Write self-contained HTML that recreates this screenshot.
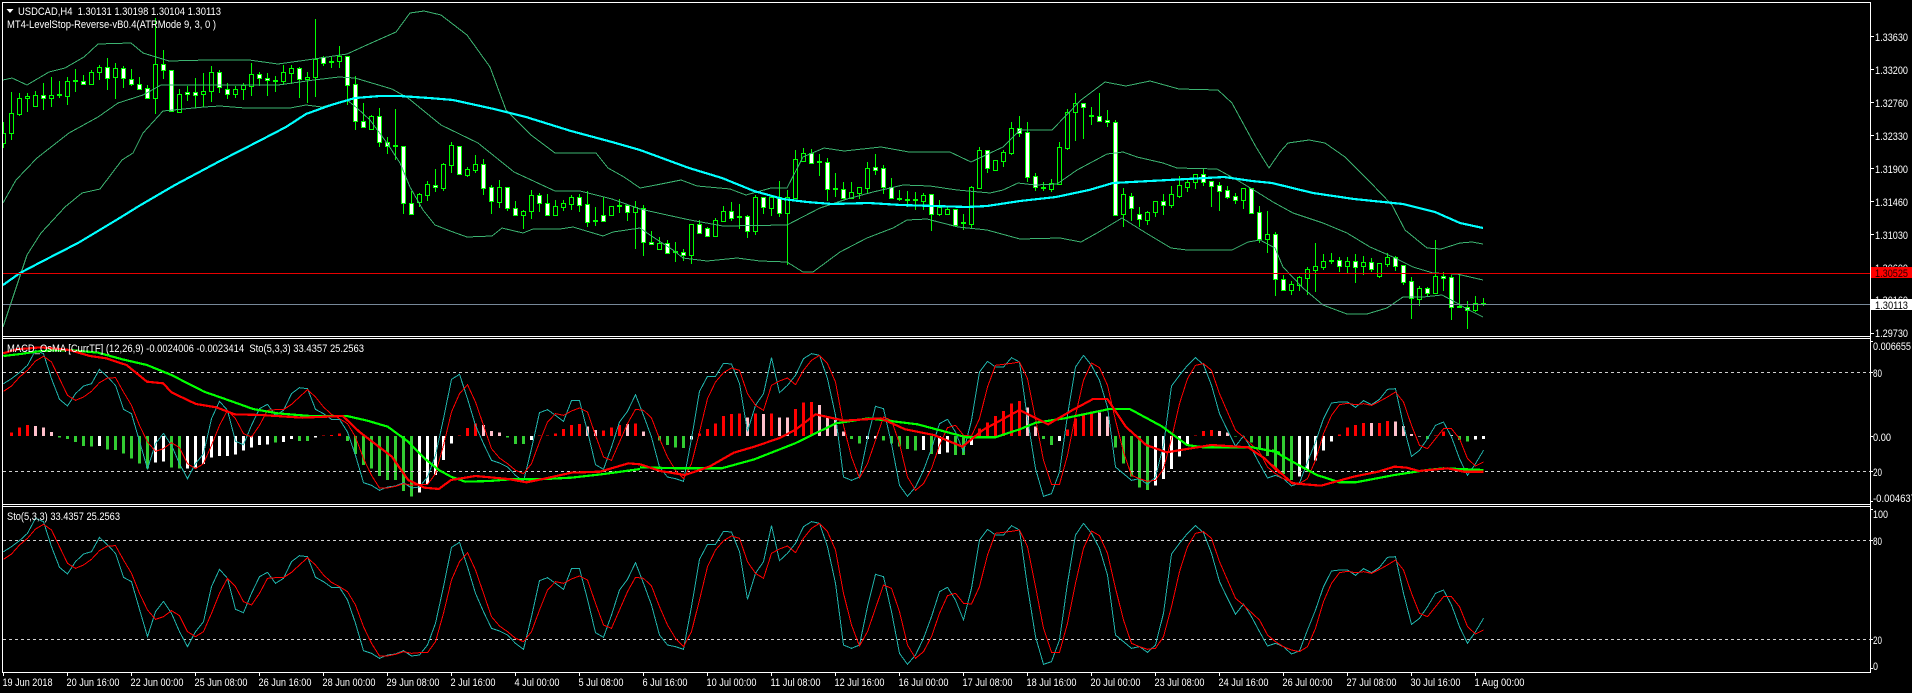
<!DOCTYPE html>
<html><head><meta charset="utf-8"><title>USDCAD,H4</title>
<style>
html,body{margin:0;padding:0;background:#000;overflow:hidden}
svg{display:block}
text{font-family:"Liberation Sans",sans-serif;font-size:11px;fill:#fff}
</style></head><body>
<svg width="1912" height="693" viewBox="0 0 1912 693" xmlns="http://www.w3.org/2000/svg">
<rect width="1912" height="693" fill="#000"/>
<!-- candles -->
<g shape-rendering="crispEdges">
<path transform="translate(.5,0)" stroke="#0f0" fill="none" d="M3 122V148M11 92V140M19 93V116M27 93V112M35 91V106M43 83V110M51 77V107M59 81V98M67 77V105M75 69V92M83 75V84M91 70V84M99 65V80M107 58V90M115 63V99M123 66V88M131 69V86M139 77V90M147 85V99M155 18V114M163 50V79M171 70V112M179 89V112M187 86V101M195 78V108M203 73V107M211 66V102M219 70V93M227 83V99M235 86V98M243 83V100M251 63V96M259 72V86M267 73V96M275 76V92M283 65V85M291 65V84M299 67V98M307 72V103M315 19V97M323 56V66M331 57V68M339 46V68M347 56V105M355 76V130M363 103V128M371 115V130M379 108V147M387 137V154M395 109V160M403 146V214M411 191V215M419 193V207M427 181V201M435 169V192M443 163V191M451 142V173M459 146V174M467 167V177M475 155V173M483 159V195M491 185V214M499 180V208M507 187V211M515 201V216M523 210V229M531 190V219M539 193V212M547 194V215M555 200V215M563 200V211M571 195V210M579 194V212M587 191V227M595 207V226M603 197V222M611 206V215M619 199V213M627 205V221M635 201V249M643 205V256M651 231V245M659 237V249M667 240V253M675 242V262M683 249V261M691 224V264M699 220V234M707 227V237M715 218V237M723 206V221M731 202V221M739 204V229M747 215V238M755 195V235M763 197V214M771 195V216M779 181V217M787 190V265M795 150V199M803 148V161M811 149V164M819 154V176M827 158V201M835 173V197M843 182V198M851 182V199M859 187V199M867 162V193M875 154V175M883 165V194M891 178V198M899 190V201M907 191V207M915 192V210M923 193V210M931 194V231M939 200V216M947 207V214M955 209V226M963 214V230M971 186V228M979 147V189M987 150V173M995 160V170M1003 150V167M1011 122V155M1019 116V137M1027 122V182M1035 173V191M1043 182V191M1051 179V192M1059 142V185M1067 109V150M1075 93V141M1083 103V139M1091 107V125M1099 93V122M1107 110V127M1115 120V216M1123 188V227M1131 193V221M1139 207V227M1147 211V225M1155 201V217M1163 194V215M1171 186V208M1179 176V198M1187 178V192M1195 174V189M1203 168V186M1211 181V207M1219 182V211M1227 186V199M1235 193V204M1243 188V209M1251 188V213M1259 206V243M1267 211V253M1275 232V296M1283 275V291M1291 281V295M1299 276V291M1307 267V295M1315 243V292M1323 254V270M1331 253V264M1339 257V272M1347 257V273M1355 254V283M1363 256V275M1371 258V272M1379 263V278M1387 253V267M1395 256V271M1403 265V285M1411 277V319M1419 286V306M1427 287V297M1435 240V294M1443 272V291M1451 275V320M1459 275V308M1467 301V329M1475 296V312M1483 298V306"/>
<!-- hollow bodies -->
<path transform="translate(-1.5,.5)" stroke="#0f0" fill="#000" d="M3 133h4V143h-4zM11 113h4V133h-4zM19 98h4V114h-4zM27 96h4V98h-4zM35 95h4V106h-4zM51 95h4V98h-4zM67 81h4V96h-4zM91 72h4V84h-4zM99 67h4V72h-4zM115 68h4V77h-4zM155 64h4V98h-4zM179 94h4V112h-4zM203 91h4V94h-4zM211 72h4V91h-4zM235 89h4V94h-4zM243 85h4V89h-4zM251 74h4V86h-4zM283 72h4V81h-4zM291 68h4V73h-4zM307 77h4V79h-4zM315 59h4V77h-4zM331 61h4V62h-4zM339 56h4V61h-4zM371 116h4V129h-4zM419 194h4V202h-4zM427 184h4V195h-4zM443 164h4V188h-4zM451 145h4V165h-4zM467 169h4V175h-4zM475 164h4V170h-4zM499 187h4V202h-4zM523 211h4V215h-4zM531 195h4V211h-4zM555 206h4V215h-4zM563 203h4V207h-4zM571 197h4V204h-4zM611 206h4V215h-4zM635 207h4V212h-4zM659 243h4V249h-4zM691 224h4V255h-4zM715 220h4V236h-4zM723 211h4V221h-4zM755 197h4V231h-4zM771 197h4V208h-4zM787 197h4V213h-4zM795 159h4V198h-4zM803 153h4V161h-4zM851 192h4V198h-4zM859 187h4V193h-4zM867 168h4V188h-4zM923 195h4V201h-4zM939 207h4V214h-4zM947 209h4V214h-4zM971 187h4V224h-4zM979 150h4V188h-4zM995 160h4V170h-4zM1003 152h4V161h-4zM1011 128h4V153h-4zM1051 183h4V189h-4zM1059 147h4V184h-4zM1067 112h4V148h-4zM1075 103h4V112h-4zM1123 194h4V214h-4zM1147 212h4V220h-4zM1155 201h4V212h-4zM1171 194h4V205h-4zM1179 185h4V196h-4zM1187 182h4V187h-4zM1195 174h4V182h-4zM1243 188h4V200h-4zM1267 234h4V239h-4zM1291 284h4V290h-4zM1299 277h4V285h-4zM1307 269h4V278h-4zM1315 266h4V270h-4zM1323 261h4V267h-4zM1347 261h4V266h-4zM1363 262h4V266h-4zM1379 263h4V276h-4zM1387 257h4V264h-4zM1419 288h4V299h-4zM1435 276h4V293h-4zM1475 303h4V310h-4z"/>
<!-- white bodies -->
<path transform="translate(-1.5,.5)" stroke="#0f0" fill="#fff" d="M43 95h4V98h-4zM83 81h4V84h-4zM107 67h4V78h-4zM123 68h4V78h-4zM131 79h4V84h-4zM139 84h4V89h-4zM147 88h4V98h-4zM163 64h4V70h-4zM171 70h4V111h-4zM187 92h4V94h-4zM195 92h4V95h-4zM219 72h4V87h-4zM227 89h4V94h-4zM259 74h4V78h-4zM267 78h4V80h-4zM299 68h4V79h-4zM323 57h4V63h-4zM347 56h4V85h-4zM355 84h4V121h-4zM363 121h4V127h-4zM379 116h4V142h-4zM387 142h4V146h-4zM403 146h4V203h-4zM411 203h4V214h-4zM435 185h4V187h-4zM459 146h4V174h-4zM483 164h4V188h-4zM491 187h4V201h-4zM507 187h4V208h-4zM515 208h4V215h-4zM539 195h4V203h-4zM547 203h4V215h-4zM579 197h4V205h-4zM587 204h4V222h-4zM603 215h4V221h-4zM627 205h4V212h-4zM643 208h4V242h-4zM651 242h4V244h-4zM667 243h4V253h-4zM683 252h4V255h-4zM699 224h4V233h-4zM707 228h4V236h-4zM731 211h4V218h-4zM747 216h4V231h-4zM763 197h4V207h-4zM779 197h4V213h-4zM811 153h4V163h-4zM827 162h4V189h-4zM843 189h4V198h-4zM875 167h4V170h-4zM883 168h4V187h-4zM891 187h4V198h-4zM899 198h4V199h-4zM931 194h4V214h-4zM955 209h4V225h-4zM987 150h4V168h-4zM1019 128h4V133h-4zM1027 132h4V177h-4zM1035 176h4V187h-4zM1083 103h4V107h-4zM1099 116h4V121h-4zM1107 120h4V122h-4zM1115 122h4V215h-4zM1131 196h4V208h-4zM1139 214h4V219h-4zM1163 201h4V205h-4zM1203 174h4V182h-4zM1211 181h4V186h-4zM1219 185h4V191h-4zM1227 190h4V197h-4zM1235 196h4V200h-4zM1251 188h4V213h-4zM1259 212h4V239h-4zM1275 234h4V279h-4zM1283 279h4V290h-4zM1339 260h4V266h-4zM1355 261h4V267h-4zM1371 262h4V269h-4zM1395 257h4V266h-4zM1403 265h4V282h-4zM1411 281h4V298h-4zM1427 288h4V293h-4zM1443 276h4V278h-4zM1451 277h4V307h-4zM1467 307h4V310h-4z"/>
<!-- doji -->
<path transform="translate(-2,0)" stroke="#0f0" stroke-width="2" fill="none" d="M59 95h5M75 81h5M275 81h5M395 146h5M595 221h5M619 206h5M675 252h5M739 217h5M819 162h5M835 189h5M907 200h5M915 200h5M963 223h5M1043 188h5M1091 116h5M1331 261h5M1459 307h5M1483 304h5"/>
</g>
<!-- Bollinger -->
<g fill="none" stroke="#3cb371" stroke-width="1" shape-rendering="crispEdges">
<polyline points="3,80 12,78 27,85 49,72 65,68 84,57 98,44 131,43 143,53 169,61 208,60 249,60 278,64 314,59 347,54 369,44 396,32 410,13 424,11 441,15 467,35 490,67 506,110 531,135 555,153 596,153 608,168 624,177 640,188 656,185 681,180 697,186 730,189 746,195 771,188 787,188 803,157 824,148 844,151 881,147 909,152 950,152 971,162 1003,147 1020,130 1052,130 1081,100 1105,82 1126,86 1150,81 1179,89 1218,90 1232,103 1256,147 1269,168 1280,152 1288,143 1309,140 1325,143 1345,157 1370,182 1392,205 1405,230 1427,248 1441,249 1460,243 1472,242 1483,244"/>
<polyline points="3,203 16,180 37,158 69,133 98,117 118,103 143,95 161,85 184,85 245,85 278,85 314,80 339,77 355,78 392,89 408,98 441,125 478,143 514,172 555,191 580,191 612,199 640,209 667,215 690,220 723,226 787,225 820,208 847,199 873,192 903,185 930,186 957,190 990,193 1003,190 1018,183 1035,185 1057,184 1077,170 1107,154 1123,152 1137,157 1163,163 1177,168 1217,169 1237,180 1257,192 1273,202 1293,213 1323,223 1347,233 1370,247 1393,257 1413,267 1433,273 1457,274 1483,280"/>
<polyline points="3,327 12,300 27,255 41,233 65,207 82,193 100,189 122,160 133,153 143,133 163,111 204,107 220,106 245,108 290,108 306,105 322,107 347,100 357,108 370,120 387,143 400,163 410,187 423,210 435,225 453,232 467,237 492,236 502,228 523,233 533,229 560,229 573,227 603,236 613,232 640,228 653,237 673,250 683,258 707,261 737,258 760,261 787,262 803,272 813,272 840,252 867,238 893,228 907,220 927,219 958,227 987,230 1020,239 1060,238 1081,242 1097,233 1122,218 1146,233 1171,248 1187,250 1232,250 1248,242 1260,240 1275,248 1283,267 1303,288 1323,305 1347,314 1367,314 1387,308 1403,297 1423,297 1442,295 1457,303 1467,309 1483,317"/>
</g>
<!-- MA -->
<polyline fill="none" stroke="#0ff" stroke-width="2.2" shape-rendering="crispEdges" points="3,285 20,273 41,262 78,243 118,219 139,206 175,185 220,161 261,140 286,127 306,114 331,105 355,98 380,96 400,96 429,98 453,100 494,109 526,117 571,131 612,142 640,150 689,168 722,178 754,191 783,199 807,202 832,204 869,203 901,205 934,206 967,207 987,206 1020,201 1056,197 1089,190 1113,183 1150,181 1187,179 1224,177 1252,181 1272,183 1313,193 1354,199 1403,204 1435,212 1460,223 1483,228"/>
<g shape-rendering="crispEdges">
<rect x="3" y="273" width="1867" height="1" fill="#e60000"/>
<rect x="3" y="304" width="1867" height="1" fill="#778899"/>
</g>
<!-- histogram -->
<g transform="translate(.5,330) scale(1,.33333)" shape-rendering="crispEdges" fill="none" stroke-width="3">
<path vector-effect="non-scaling-stroke" stroke="#f00" d="M11 318V307M19 318V292M27 318V285M323 318V316M331 318V315M339 318V311M459 318V317M467 318V294M475 318V280M539 318V317M547 318V316M555 318V310M563 318V297M571 318V285M579 318V282M603 318V302M611 318V292M619 318V285M635 318V280M699 318V310M707 318V297M715 318V280M723 318V258M731 318V252M739 318V250M755 318V250M771 318V250M795 318V237M803 318V218M811 318V216M979 318V295M987 318V277M995 318V258M1003 318V243M1011 318V220M1019 318V213M1067 318V298M1075 318V265M1083 318V255M1091 318V245M1195 318V317M1203 318V303M1211 318V300M1339 318V313M1347 318V293M1355 318V285M1363 318V279M1379 318V279M1387 318V273M1435 318V316M1443 318V305"/>
<path vector-effect="non-scaling-stroke" stroke="#ffc0cb" d="M35 318V288M43 318V293M51 318V306M483 318V285M491 318V303M499 318V307M587 318V290M595 318V300M627 318V282M643 318V305M747 318V262M763 318V252M779 318V262M787 318V262M819 318V225M827 318V260M835 318V270M843 318V305M1027 318V233M1035 318V290M1099 318V248M1107 318V260M1219 318V303M1227 318V308M1371 318V279M1395 318V275M1403 318V288M1411 318V312M1451 318V315"/>
<path vector-effect="non-scaling-stroke" stroke="#32cd32" d="M59 318V322M67 318V327M75 318V336M83 318V348M91 318V350M107 318V358M115 318V360M123 318V370M131 318V385M139 318V400M147 318V415M171 318V413M179 318V415M275 318V338M299 318V333M307 318V333M347 318V333M355 318V372M363 318V405M371 318V415M379 318V438M387 318V450M395 318V450M403 318V483M411 318V500M507 318V323M515 318V342M523 318V342M659 318V332M667 318V345M675 318V352M683 318V354M851 318V327M859 318V340M883 318V332M891 318V340M899 318V350M907 318V357M915 318V362M931 318V372M955 318V375M963 318V375M1043 318V327M1051 318V345M1115 318V352M1123 318V400M1131 318V440M1139 318V473M1147 318V480M1235 318V320M1243 318V320M1251 318V337M1259 318V355M1267 318V378M1275 318V418M1283 318V432M1291 318V450M1427 318V327M1459 318V330M1467 318V335"/>
<path vector-effect="non-scaling-stroke" stroke="#fff" d="M99 318V348M155 318V398M163 318V395M187 318V415M195 318V413M203 318V402M211 318V382M219 318V378M227 318V378M235 318V373M243 318V362M251 318V352M259 318V345M267 318V343M283 318V336M291 318V327M315 318V323M419 318V488M427 318V462M435 318V435M443 318V390M451 318V340M531 318V330M691 318V328M867 318V327M875 318V326M923 318V360M939 318V372M947 318V368M971 318V345M1059 318V333M1155 318V467M1163 318V447M1171 318V417M1179 318V380M1187 318V345M1299 318V440M1307 318V420M1315 318V392M1323 318V362M1331 318V335M1419 318V320M1475 318V328M1483 318V327"/>
</g>
<!-- level lines -->
<g stroke="#d0d0d0" stroke-dasharray="3 3" shape-rendering="crispEdges">
<path d="M3 372.5H1870M3 471.5H1870M3 540.5H1870M3 639.5H1870"/>
</g>
<!-- stochastic lower panel -->
<g id="sto" transform="translate(3.5,330) scale(8,.33333)" fill="none" stroke-width="1" shape-rendering="crispEdges">
<polyline vector-effect="non-scaling-stroke" stroke="#20b2aa" points="0,665 1,650 2,632 3,610 4,565 5,575 6,650 7,712 8,732 9,695 10,672 11,665 12,622 13,645 14,670 15,742 16,755 17,838 18,920 19,845 20,814 21,850 22,905 23,950 24,905 25,875 26,770 27,718 28,745 29,838 30,848 31,790 32,740 33,727 34,760 35,745 36,695 37,677 38,680 39,742 40,755 41,772 42,772 43,810 44,880 45,962 46,970 47,985 48,975 49,972 50,962 51,978 52,975 53,945 54,880 55,770 56,652 57,637 58,710 59,790 60,845 61,895 62,903 63,915 64,940 65,958 66,860 67,752 68,743 69,760 70,778 71,716 72,716 73,808 74,908 75,922 76,855 77,780 78,748 79,698 80,760 81,825 82,915 83,945 84,950 85,958 86,830 87,688 88,643 89,643 90,604 91,606 92,665 93,808 94,730 95,695 96,587 97,692 98,670 99,640 100,590 101,575 102,580 103,650 104,760 105,945 106,955 107,945 108,830 109,733 110,740 111,845 112,970 113,1003 114,975 115,925 116,860 117,785 118,772 119,810 120,870 121,775 122,630 123,598 124,615 125,615 126,587 127,600 128,770 129,920 130,1003 131,995 132,930 133,760 134,615 135,580 136,610 137,655 138,735 139,915 140,935 141,955 142,950 143,967 144,945 145,850 146,672 147,640 148,610 149,587 150,608 151,670 152,755 153,805 154,853 155,822 156,860 157,905 158,948 159,940 160,950 161,972 162,963 163,900 164,840 165,770 166,723 167,720 168,720 169,736 170,716 171,728 172,712 173,682 174,680 175,790 176,883 177,865 178,830 179,790 180,780 181,825 182,890 183,940 184,905 185,865"/>
<polyline vector-effect="non-scaling-stroke" stroke="#f00" points="0,688 1,672 2,645 3,625 4,597 5,583 6,600 7,650 8,700 9,715 10,705 11,688 12,662 13,648 14,647 15,690 16,730 17,790 18,840 19,868 20,860 21,842 22,857 23,905 24,920 25,905 26,850 27,790 28,745 29,770 30,815 31,825 32,790 33,745 34,743 35,743 36,727 37,705 38,683 39,705 40,735 41,757 42,770 43,785 44,825 45,890 46,940 47,978 48,978 49,973 50,965 51,970 52,968 53,968 54,935 55,850 56,750 57,695 58,668 59,720 60,790 61,860 62,888 63,905 64,925 65,935 66,905 67,840 68,780 69,755 70,760 71,747 72,738 73,750 74,820 75,885 76,895 77,840 78,785 79,742 80,745 81,768 82,830 83,885 84,925 85,950 86,905 87,810 88,710 89,660 90,632 91,618 92,625 93,695 94,730 95,745 96,670 97,657 98,648 99,668 100,625 101,595 102,580 103,605 104,660 105,790 106,885 107,948 108,905 109,835 110,765 111,775 112,845 113,945 114,985 115,965 116,920 117,850 118,797 119,790 120,820 121,822 122,770 123,675 124,610 125,607 126,604 127,600 128,650 129,770 130,895 131,967 132,967 133,880 134,760 135,655 136,603 137,617 138,670 139,775 140,870 141,940 142,950 143,958 144,955 145,920 146,830 147,725 148,650 149,610 150,605 151,625 152,695 153,750 154,805 155,825 156,848 157,870 158,915 159,935 160,950 161,960 162,965 163,950 164,895 165,815 166,760 167,728 168,724 169,728 170,725 171,730 172,718 173,705 174,690 175,720 176,790 177,850 178,860 179,830 180,800 181,800 182,830 183,890 184,912 185,900"/>
</g>
<!-- stochastic repeated in MACD panel -->
<use href="#sto" transform="translate(0,-168)"/>
<!-- MACD lines -->
<g fill="none" stroke-width="2.2" shape-rendering="crispEdges">
<g stroke="#0f0">
<polyline vector-effect="non-scaling-stroke" transform="translate(0,330) scale(.40816,.33333)" points="8,78 50,72 100,63 170,60 240,68 300,88 360,105 420,135 500,185 570,215 620,237 680,250 760,258 850,258 900,272 950,290 1000,335 1040,385 1075,420 1105,440 1140,455 1200,453 1260,447 1320,448 1400,443 1480,432 1568,417"/>
<polyline vector-effect="non-scaling-stroke" transform="translate(640,330) scale(.40816,.33333)" points="0,412 100,415 200,415 280,388 380,340 480,280 560,265 680,283 800,322 870,322 930,298 970,278 1040,265 1150,237 1200,237 1280,290 1340,345 1380,352 1500,352 1568,368"/>
<polyline vector-effect="non-scaling-stroke" transform="translate(1272,330) scale(.40816,.33333)" points="0,360 50,395 110,435 165,457 205,457 300,435 380,420 420,415 518,420"/>
</g>
<g stroke="#f00">
<polyline vector-effect="non-scaling-stroke" transform="translate(0,330) scale(.40816,.33333)" points="8,70 40,58 100,52 170,60 220,78 260,85 310,105 360,155 400,160 420,187 480,222 530,232 575,253 640,255 740,263 840,258 880,305 960,380 1000,450 1040,473 1075,477 1105,450 1165,438 1245,447 1290,457 1330,447 1400,428 1470,425 1540,400 1568,403"/>
<polyline vector-effect="non-scaling-stroke" transform="translate(640,330) scale(.40816,.33333)" points="0,403 50,423 110,435 170,410 230,368 280,350 340,325 380,300 430,253 500,272 590,265 650,298 720,315 790,350 840,300 930,240 1000,283 1060,240 1110,207 1145,207 1190,290 1240,345 1290,367 1340,357 1400,345 1490,352 1530,385 1568,430"/>
<polyline vector-effect="non-scaling-stroke" transform="translate(1272,330) scale(.40816,.33333)" points="0,405 50,460 120,467 200,440 260,425 300,410 330,413 360,423 430,415 470,425 518,425"/>
</g>
</g>
<!-- frames -->
<g shape-rendering="crispEdges" fill="#fff">
<rect x="0" y="0" width="2" height="693" fill="#000"/>
<rect x="2" y="2" width="1869" height="1"/>
<rect x="2" y="336" width="1869" height="1"/>
<rect x="2" y="338" width="1869" height="1"/>
<rect x="2" y="504" width="1869" height="1"/>
<rect x="2" y="506" width="1869" height="1"/>
<rect x="2" y="672" width="1869" height="1"/>
<rect x="2" y="2" width="1" height="671"/>
<rect x="1870" y="2" width="1" height="671"/>
<path d="M1871 36h3v1h-3zM1871 69h3v1h-3zM1871 102h3v1h-3zM1871 135h3v1h-3zM1871 168h3v1h-3zM1871 201h3v1h-3zM1871 234h3v1h-3zM1871 267h3v1h-3zM1871 300h3v1h-3zM1871 333h3v1h-3zM1871 341h2v1h-2zM1871 372h2v1h-2zM1871 436h2v1h-2zM1871 471h2v1h-2zM1871 501h2v1h-2zM1871 509h2v1h-2zM1871 540h2v1h-2zM1871 639h2v1h-2zM1871 668h2v1h-2z"/>
<path d="M3 673h1v3h-1zM67 673h1v3h-1zM131 673h1v3h-1zM195 673h1v3h-1zM259 673h1v3h-1zM323 673h1v3h-1zM387 673h1v3h-1zM451 673h1v3h-1zM515 673h1v3h-1zM579 673h1v3h-1zM643 673h1v3h-1zM707 673h1v3h-1zM771 673h1v3h-1zM835 673h1v3h-1zM899 673h1v3h-1zM963 673h1v3h-1zM1027 673h1v3h-1zM1091 673h1v3h-1zM1155 673h1v3h-1zM1219 673h1v3h-1zM1283 673h1v3h-1zM1347 673h1v3h-1zM1411 673h1v3h-1zM1475 673h1v3h-1z"/>
</g>
<!-- header text -->
<path d="M6.5 9h7l-3.5 4z" fill="#fff"/>
<text x="18" y="15" textLength="203" lengthAdjust="spacingAndGlyphs" xml:space="preserve">USDCAD,H4  1.30131 1.30198 1.30104 1.30113</text>
<text x="7" y="28" textLength="209" lengthAdjust="spacingAndGlyphs" xml:space="preserve">MT4-LevelStop-Reverse-vB0.4(ATRMode 9, 3, 0 )</text>
<text x="7" y="352" textLength="357" lengthAdjust="spacingAndGlyphs" xml:space="preserve">MACD_OsMA [CurrTF] (12,26,9) -0.0024006 -0.0023414  Sto(5,3,3) 33.4357 25.2563</text>
<text x="7" y="520" textLength="113" lengthAdjust="spacingAndGlyphs">Sto(5,3,3) 33.4357 25.2563</text>
<!-- price scale -->
<g>
<text x="1875" y="41" textLength="33" lengthAdjust="spacingAndGlyphs">1.33630</text>
<text x="1875" y="74" textLength="33" lengthAdjust="spacingAndGlyphs">1.33200</text>
<text x="1875" y="107" textLength="33" lengthAdjust="spacingAndGlyphs">1.32760</text>
<text x="1875" y="140" textLength="33" lengthAdjust="spacingAndGlyphs">1.32330</text>
<text x="1875" y="173" textLength="33" lengthAdjust="spacingAndGlyphs">1.31900</text>
<text x="1875" y="206" textLength="33" lengthAdjust="spacingAndGlyphs">1.31460</text>
<text x="1875" y="239" textLength="33" lengthAdjust="spacingAndGlyphs">1.31030</text>
<text x="1875" y="272" textLength="33" lengthAdjust="spacingAndGlyphs">1.30600</text>
<text x="1875" y="304" textLength="33" lengthAdjust="spacingAndGlyphs">1.30160</text>
<text x="1875" y="337" textLength="33" lengthAdjust="spacingAndGlyphs">1.29730</text>
<rect x="1871" y="267" width="41" height="11" fill="#f00" shape-rendering="crispEdges"/>
<text x="1875" y="277" textLength="33" lengthAdjust="spacingAndGlyphs" style="fill:#200">1.30525</text>
<rect x="1871" y="299" width="41" height="11" fill="#fff" shape-rendering="crispEdges"/>
<text x="1875" y="309" textLength="33" lengthAdjust="spacingAndGlyphs" style="fill:#000">1.30113</text>
<text x="1873" y="350" textLength="38" lengthAdjust="spacingAndGlyphs">0.006655</text>
<text x="1873" y="377" textLength="9" lengthAdjust="spacingAndGlyphs">80</text>
<text x="1873" y="441" textLength="18" lengthAdjust="spacingAndGlyphs">0.00</text>
<text x="1873" y="476" textLength="9" lengthAdjust="spacingAndGlyphs">20</text>
<text x="1873" y="502" textLength="43" lengthAdjust="spacingAndGlyphs">-0.004637</text>
<text x="1873" y="518" textLength="15" lengthAdjust="spacingAndGlyphs">100</text>
<text x="1873" y="545" textLength="9" lengthAdjust="spacingAndGlyphs">80</text>
<text x="1873" y="644" textLength="9" lengthAdjust="spacingAndGlyphs">20</text>
<text x="1873" y="670" textLength="5" lengthAdjust="spacingAndGlyphs">0</text>
</g>
<!-- time scale -->
<g>
<text x="2.5" y="686" textLength="50" lengthAdjust="spacingAndGlyphs">19 Jun 2018</text>
<text x="66.5" y="686" textLength="53" lengthAdjust="spacingAndGlyphs">20 Jun 16:00</text>
<text x="130.5" y="686" textLength="53" lengthAdjust="spacingAndGlyphs">22 Jun 00:00</text>
<text x="194.5" y="686" textLength="53" lengthAdjust="spacingAndGlyphs">25 Jun 08:00</text>
<text x="258.5" y="686" textLength="53" lengthAdjust="spacingAndGlyphs">26 Jun 16:00</text>
<text x="322.5" y="686" textLength="53" lengthAdjust="spacingAndGlyphs">28 Jun 00:00</text>
<text x="386.5" y="686" textLength="53" lengthAdjust="spacingAndGlyphs">29 Jun 08:00</text>
<text x="450.5" y="686" textLength="45" lengthAdjust="spacingAndGlyphs">2 Jul 16:00</text>
<text x="514.5" y="686" textLength="45" lengthAdjust="spacingAndGlyphs">4 Jul 00:00</text>
<text x="578.5" y="686" textLength="45" lengthAdjust="spacingAndGlyphs">5 Jul 08:00</text>
<text x="642.5" y="686" textLength="45" lengthAdjust="spacingAndGlyphs">6 Jul 16:00</text>
<text x="706.5" y="686" textLength="50" lengthAdjust="spacingAndGlyphs">10 Jul 00:00</text>
<text x="770.5" y="686" textLength="50" lengthAdjust="spacingAndGlyphs">11 Jul 08:00</text>
<text x="834.5" y="686" textLength="50" lengthAdjust="spacingAndGlyphs">12 Jul 16:00</text>
<text x="898.5" y="686" textLength="50" lengthAdjust="spacingAndGlyphs">16 Jul 00:00</text>
<text x="962.5" y="686" textLength="50" lengthAdjust="spacingAndGlyphs">17 Jul 08:00</text>
<text x="1026.5" y="686" textLength="50" lengthAdjust="spacingAndGlyphs">18 Jul 16:00</text>
<text x="1090.5" y="686" textLength="50" lengthAdjust="spacingAndGlyphs">20 Jul 00:00</text>
<text x="1154.5" y="686" textLength="50" lengthAdjust="spacingAndGlyphs">23 Jul 08:00</text>
<text x="1218.5" y="686" textLength="50" lengthAdjust="spacingAndGlyphs">24 Jul 16:00</text>
<text x="1282.5" y="686" textLength="50" lengthAdjust="spacingAndGlyphs">26 Jul 00:00</text>
<text x="1346.5" y="686" textLength="50" lengthAdjust="spacingAndGlyphs">27 Jul 08:00</text>
<text x="1410.5" y="686" textLength="50" lengthAdjust="spacingAndGlyphs">30 Jul 16:00</text>
<text x="1474.5" y="686" textLength="50" lengthAdjust="spacingAndGlyphs">1 Aug 00:00</text>
</g>
</svg>
</body></html>
